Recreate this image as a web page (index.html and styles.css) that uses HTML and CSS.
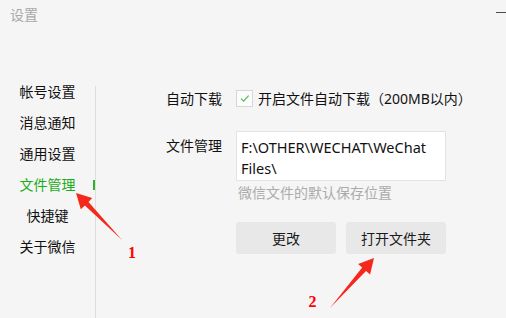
FILE: index.html
```html
<!DOCTYPE html>
<html lang="zh-CN">
<head>
<meta charset="utf-8">
<title>设置</title>
<link rel="stylesheet" href="styles.css">
</head>
<body>
<div class="window">
  <header class="titlebar">
    <span class="title">设置</span>
    <span class="minimize"></span>
  </header>
  <div class="main">
    <nav class="nav">
      <div class="nav-item">帐号设置</div>
      <div class="nav-item">消息通知</div>
      <div class="nav-item">通用设置</div>
      <div class="nav-item active">文件管理</div>
      <div class="nav-item">快捷键</div>
      <div class="nav-item">关于微信</div>
    </nav>
    <section class="content">
      <div class="row row-check">
        <div class="label">自动下载</div>
        <label class="check">
          <span class="box"><svg width="15" height="15" viewBox="0 0 15 15"><path d="M4 7.6 L6.6 10.2 L11.6 4.6" fill="none" stroke="#4cbf4c" stroke-width="1.2"/></svg></span>
          <span class="check-text">开启文件自动下载（200MB以内）</span>
        </label>
      </div>
      <div class="row row-path">
        <div class="label label-top">文件管理</div>
        <div class="field">
          <div class="path">F:\OTHER\WECHAT\WeChat Files\</div>
          <div class="hint">微信文件的默认保存位置</div>
          <div class="buttons">
            <button class="btn">更改</button>
            <button class="btn">打开文件夹</button>
          </div>
        </div>
      </div>
    </section>
  </div>
  <svg class="annot" width="506" height="318" viewBox="0 0 506 318">
    <polygon points="76,193 80.8,209.3 84.9,205.6 122,240 88.5,202 92.2,198.1" fill="#f5281c"/>
    <polygon points="374,258 370.1,274.6 366,271 330,308 362.2,267.6 358.1,264" fill="#f5281c"/>
    <text x="132" y="258" class="num" text-anchor="middle">1</text>
    <text x="312.5" y="307" class="num" text-anchor="middle">2</text>
  </svg>
</div>
</body>
</html>
```
FILE: styles.css
```css
* { box-sizing: border-box; }
html, body {
  margin: 0;
  padding: 0;
  background: #f5f5f5;
}
body {
  font-family: "Noto Sans", "Noto Sans CJK SC", sans-serif;
  font-size: 14px;
  color: #111;
}
.window {
  position: relative;
  width: 506px;
  height: 318px;
  overflow: hidden;
  display: flex;
  flex-direction: column;
  background: #f5f5f5;
}
.titlebar {
  height: 30px;
  flex: none;
  display: flex;
  justify-content: space-between;
  align-items: flex-start;
  padding-left: 10px;
}
.title {
  line-height: 30px;
  color: #a8a8a8;
  font-size: 14px;
}
.minimize {
  width: 10px;
  height: 1px;
  margin-top: 12px;
  background: #4a4a4a;
}
.main {
  flex: 1;
  display: flex;
}
.nav {
  width: 96px;
  flex: none;
  margin-top: 56px;
  border-right: 1px solid #dedede;
  display: flex;
  flex-direction: column;
  gap: 19px;
}
.nav-item {
  position: relative;
  line-height: 12px;
  height: 12px;
  text-align: center;
  white-space: nowrap;
}
.nav-item.active {
  color: #1aad19;
}
.nav-item.active::after {
  content: "";
  position: absolute;
  right: 0;
  top: 1px;
  width: 2px;
  height: 10px;
  background: #2ab52a;
}
.content {
  flex: 1;
  padding: 60px 0 0 70px;
  display: flex;
  flex-direction: column;
  gap: 24px;
}
.row {
  display: flex;
  align-items: flex-start;
}
.label {
  width: 70px;
  flex: none;
  line-height: 17px;
  white-space: nowrap;
}
.label-top {
  line-height: 20px;
  padding-top: 5px;
}
.check {
  display: flex;
  align-items: center;
  gap: 5px;
}
.box {
  width: 17px;
  height: 17px;
  border: 1px solid #d6d6d6;
  background: #fcfcfc;
  display: flex;
}
.check-text {
  line-height: 17px;
  white-space: nowrap;
}
.field {
  display: flex;
  flex-direction: column;
}
.path {
  width: 210px;
  height: 50px;
  background: #fff;
  border: 1px solid #e3e3e3;
  padding: 5px 4px 0 4px;
  line-height: 21px;
  font-size: 14.5px;
  color: #111;
}
.hint {
  margin-top: 5px;
  line-height: 14px;
  padding-left: 2px;
  color: #ababab;
}
.buttons {
  margin-top: 22px;
  display: flex;
  gap: 10px;
}
.btn {
  width: 100px;
  height: 32px;
  border: none;
  border-radius: 3px;
  background: #e8e8e8;
  font-family: "Noto Sans", "Noto Sans CJK SC", sans-serif;
  font-size: 14px;
  color: #1a1a1a;
  padding: 0;
}
.annot {
  position: absolute;
  left: 0;
  top: 0;
  pointer-events: none;
}
.num {
  font-family: "Liberation Serif", serif;
  font-weight: bold;
  font-size: 16px;
  fill: #ff0000;
}
```
